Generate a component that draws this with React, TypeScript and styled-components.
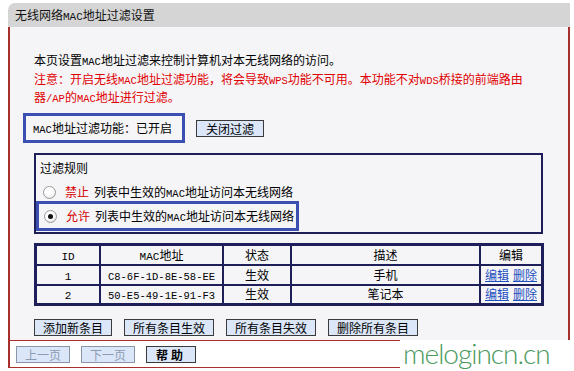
import React from 'react'
import styled, { createGlobalStyle } from 'styled-components'

const GlobalStyle = createGlobalStyle`
  html, body {
    margin: 0;
    padding: 0;
    background: #ffffff;
  }
  body {
    font-family: "Noto Sans CJK SC", "Liberation Sans", sans-serif;
    font-size: 12px;
    color: #000000;
  }
`

const Page = styled.div`
  position: relative;
  width: 574px;
  height: 371px;
  padding: 3px 0 0 8px;
  box-sizing: border-box;
  overflow: hidden;
`

const Panel = styled.div`
  width: 562px;
`

const Header = styled.div`
  height: 24px;
  background: #d5d5d5;
  border-top-left-radius: 7px;
  padding-left: 7px;
  line-height: 24px;
  font-size: 12px;
  color: #111;
`

const Body = styled.div`
  background: #f5f5f8;
  border-left: 2px solid #a8302c;
  border-right: 2px solid #a8302c;
  border-bottom: 1px solid #a8302c;
  padding: 24px 0 4px 0;
`

const Mono = styled.span<{ $size?: number }>`
  font-family: "Liberation Mono", monospace;
  font-size: ${({ $size }) => $size ?? 10.5}px;
  line-height: 1;
`

const Intro = styled.p`
  margin: 0 0 0 24px;
  line-height: 18.5px;
  height: 56px;
`

const Warn = styled.span`
  color: #e00000;
`

const StatusRow = styled.div`
  display: flex;
  align-items: center;
  gap: 11px;
  height: 30px;
  margin: 6px 0 0 13px;
`

const StatusBox = styled.div`
  box-sizing: border-box;
  width: 162px;
  height: 30px;
  border: 3px solid #3a4fb0;
  padding-left: 7px;
  line-height: 24px;
`

const Button = styled.button<{ $w: number; $muted?: boolean; $bold?: boolean }>`
  box-sizing: border-box;
  width: ${({ $w }) => $w}px;
  height: 17px;
  padding: 0;
  margin: 0;
  background: #dbe7f9;
  border: 1px solid ${({ $muted }) => ($muted ? '#8896aa' : '#3a3a3a')};
  color: ${({ $muted }) => ($muted ? '#8c9ab4' : '#000')};
  font-family: "Noto Sans CJK SC", sans-serif;
  font-size: 12px;
  font-weight: ${({ $bold }) => ($bold ? 'bold' : 'normal')};
  line-height: 15px;
  letter-spacing: ${({ $bold }) => ($bold ? '3px' : '0')};
`

const Rules = styled.div`
  box-sizing: border-box;
  margin: 10px 0 0 24px;
  width: 509px;
  height: 81px;
  border: 2px solid #1e1e5a;
  padding: 4px 0 1px 0;
`

const RulesTitle = styled.div`
  padding-left: 4px;
  line-height: 18px;
  height: 18px;
  margin-bottom: 6px;
`

const RadioRow = styled.div<{ $selected?: boolean }>`
  box-sizing: border-box;
  display: flex;
  align-items: center;
  width: 263px;
  height: ${({ $selected }) => ($selected ? 30 : 18)}px;
  border: ${({ $selected }) => ($selected ? '3px solid #3a4fb0' : 'none')};
  padding-left: ${({ $selected }) => ($selected ? 5 : 7)}px;
  white-space: nowrap;
`

const Label = styled.span`
  line-height: 18px;
`

const Radio = styled.span<{ $checked?: boolean }>`
  position: relative;
  flex: none;
  width: 11px;
  height: 11px;
  border-radius: 50%;
  border: 1px solid #9a9a9a;
  background: radial-gradient(circle at 40% 35%, #ffffff 40%, #dcdcdc 100%);
  margin-right: 9px;
  &::after {
    content: '';
    display: ${({ $checked }) => ($checked ? 'block' : 'none')};
    position: absolute;
    left: 3px;
    top: 3px;
    width: 5px;
    height: 5px;
    border-radius: 50%;
    background: #111;
  }
`

const Red = styled.span`
  color: #d40000;
  margin-right: 5px;
`

const Table = styled.table`
  margin: 9px 0 0 24px;
  width: 510px;
  border-collapse: collapse;
  border: 3px solid #1e1e5a;
`

const Row = styled.tr`
  height: 20px;
`

const Th = styled.th<{ $w?: number }>`
  width: ${({ $w }) => ($w ? `${$w}px` : 'auto')};
  border: 2px solid #1e1e5a;
  font-weight: normal;
  padding: 0;
  text-align: center;
  line-height: 16px;
`

const Td = styled.td`
  border: 2px solid #1e1e5a;
  padding: 0;
  text-align: center;
  line-height: 16px;
`

const Link = styled.a`
  color: #1f50c0;
  text-decoration: underline;
  margin: 0 2px;
  cursor: pointer;
`

const ActionRow = styled.div`
  display: flex;
  gap: 12px;
  margin: 13px 0 0 24px;
`

const Footer = styled.div`
  border-left: 2px solid #a8302c;
  border-right: 2px solid #a8302c;
  border-bottom: 1px solid #a8302c;
  height: 26px;
  display: flex;
  align-items: center;
  gap: 11px;
  padding-left: 6px;
`

const Watermark = styled.div`
  position: absolute;
  left: 400px;
  top: 340px;
  width: 174px;
  height: 31px;
  background: #ffffff;
  padding-left: 3px;
  box-sizing: border-box;
  font-family: "Lato", "DejaVu Sans", sans-serif;
  font-weight: 300;
  font-size: 28px;
  line-height: 27px;
  letter-spacing: -1px;
  color: #4a9a5c;
  white-space: nowrap;
`

const entries = [
  { id: '1', mac: 'C8-6F-1D-8E-58-EE', state: '生效', desc: '手机' },
  { id: '2', mac: '50-E5-49-1E-91-F3', state: '生效', desc: '笔记本' },
]

const App: React.FC = (): JSX.Element => {
  return (
    <Page>
      <GlobalStyle />
      <Panel>
        <Header>
          无线网络<Mono $size={11}>MAC</Mono>地址过滤设置
        </Header>
        <Body>
          <Intro>
            本页设置<Mono>MAC</Mono>地址过滤来控制计算机对本无线网络的访问。
            <br />
            <Warn>
              注意：开启无线<Mono>MAC</Mono>地址过滤功能，将会导致<Mono>WPS</Mono>
              功能不可用。本功能不对<Mono>WDS</Mono>桥接的前端路由
              <br />
              器<Mono>/AP</Mono>的<Mono>MAC</Mono>地址进行过滤。
            </Warn>
          </Intro>

          <StatusRow>
            <StatusBox>
              <Mono>MAC</Mono>地址过滤功能：已开启
            </StatusBox>
            <Button $w={68}>关闭过滤</Button>
          </StatusRow>

          <Rules>
            <RulesTitle>过滤规则</RulesTitle>
            <RadioRow>
              <Radio />
              <Label>
                <Red>禁止</Red>列表中生效的<Mono>MAC</Mono>地址访问本无线网络
              </Label>
            </RadioRow>
            <RadioRow $selected>
              <Radio $checked />
              <Label>
                <Red>允许</Red>列表中生效的<Mono>MAC</Mono>地址访问本无线网络
              </Label>
            </RadioRow>
          </Rules>

          <Table>
            <thead>
              <Row>
                <Th $w={62}>
                  <Mono $size={11}>ID</Mono>
                </Th>
                <Th $w={121}>
                  <Mono $size={11}>MAC</Mono>地址
                </Th>
                <Th $w={66}>状态</Th>
                <Th>描述</Th>
                <Th $w={60}>编辑</Th>
              </Row>
            </thead>
            <tbody>
              {entries.map((e, i: number) => (
                <Row key={i}>
                  <Td>
                    <Mono $size={11}>{e.id}</Mono>
                  </Td>
                  <Td>
                    <Mono $size={10.5}>{e.mac}</Mono>
                  </Td>
                  <Td>{e.state}</Td>
                  <Td>{e.desc}</Td>
                  <Td>
                    <Link>编辑</Link>
                    <Link>删除</Link>
                  </Td>
                </Row>
              ))}
            </tbody>
          </Table>

          <ActionRow>
            <Button $w={78}>添加新条目</Button>
            <Button $w={90}>所有条目生效</Button>
            <Button $w={90}>所有条目失效</Button>
            <Button $w={90}>删除所有条目</Button>
          </ActionRow>
        </Body>
        <Footer>
          <Button $w={54} $muted>
            上一页
          </Button>
          <Button $w={54} $muted>
            下一页
          </Button>
          <Button $w={50} $bold>
            帮助
          </Button>
        </Footer>
      </Panel>
      <Watermark>melogincn.cn</Watermark>
    </Page>
  )
}

export default App
